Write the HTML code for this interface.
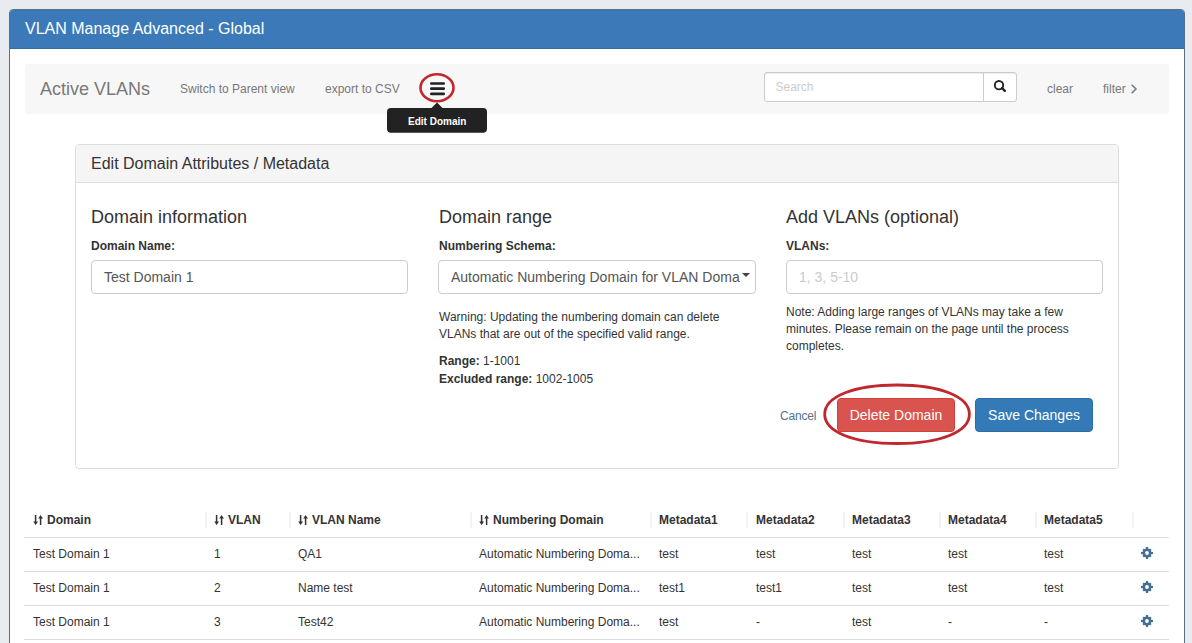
<!DOCTYPE html>
<html><head><meta charset="utf-8">
<style>
*{box-sizing:border-box;margin:0;padding:0}
html,body{width:1192px;height:643px;overflow:hidden}
body{background:#e8ecf1;font-family:"Liberation Sans",sans-serif;color:#333;position:relative}
.a{position:absolute;white-space:nowrap}
#panel{position:absolute;left:9px;top:9px;width:1176px;height:660px;background:#fff;border:1px solid #5b6f80;border-radius:4px;overflow:hidden}
#phead{position:absolute;left:0;top:0;width:100%;height:39px;background:#3c79b8;border-bottom:1px solid #3a6a9a}
#well{position:absolute;left:15px;top:54px;width:1144px;height:50px;background:#f7f7f7;border-radius:3px}
.t16{font-size:16px;line-height:18px}
.t12{font-size:12px;line-height:14px}
.gray{color:#777}
#editp{position:absolute;left:75px;top:144px;width:1044px;height:325px;border:1px solid #dddddd;border-radius:4px;background:#fff}
#editp .hd{position:absolute;left:0;top:0;width:100%;height:38px;background:#f5f5f5;border-bottom:1px solid #ddd;border-radius:3px 3px 0 0}
.inp{position:absolute;height:34px;border:1px solid #ccc;border-radius:4px;background:#fff}
.btn{position:absolute;height:34px;border-radius:4px;color:#fff;font-size:14px;text-align:center;line-height:32px}
table{border-collapse:collapse}
.th,.td{position:absolute;font-size:12px;white-space:nowrap}
.th{font-weight:bold;color:#333}
.hl{position:absolute;left:24px;width:1145px;height:1px;background:#ddd}
.sep{position:absolute;top:512px;width:2px;height:16px;background:#f3f3f3}
</style></head>
<body>
<div id="panel">
  <div id="phead"></div>
</div>
<div class="a t16" style="left:25px;top:20px;color:#fff">VLAN Manage Advanced - Global</div>

<div id="well" style="left:25px;top:64px"></div>
<div class="a gray" style="left:40px;top:79px;font-size:18px;line-height:20px">Active VLANs</div>
<div class="a t12 gray" style="left:180px;top:82px">Switch to Parent view</div>
<div class="a t12 gray" style="left:325px;top:82px">export to CSV</div>

<!-- hamburger -->
<svg class="a" style="left:410px;top:66px" width="60" height="70" viewBox="0 0 60 70">
  <rect x="20" y="16.2" width="15" height="2.6" rx="1.2" fill="#222"/>
  <rect x="20" y="21.3" width="15" height="2.6" rx="1.2" fill="#222"/>
  <rect x="20" y="26.6" width="15" height="2.6" rx="1.2" fill="#222"/>
  <ellipse cx="27" cy="21.8" rx="16.5" ry="13.5" fill="none" stroke="#c1272d" stroke-width="2.6"/>
</svg>
<!-- tooltip -->
<svg class="a" style="left:387px;top:102px" width="100" height="31" viewBox="0 0 100 31">
  <path d="M44.5 6 L50 0.5 L55.5 6 Z" fill="#222"/>
  <rect x="0" y="6" width="100" height="24.8" rx="4" fill="#222"/>
</svg>
<div class="a" style="left:408px;top:116px;font-size:10px;line-height:11px;font-weight:bold;color:#fff">Edit Domain</div>

<!-- search -->
<div class="a" style="left:764px;top:72px;width:253px;height:30px;border:1px solid #ccc;border-radius:3px;background:#fff;box-shadow:inset 0 1px 1px rgba(0,0,0,.075)"></div>
<div class="a" style="left:983px;top:72px;width:1px;height:30px;background:#ccc"></div>
<div class="a t12" style="left:775.5px;top:80px;color:#cbcbcb">Search</div>
<svg class="a" style="left:990px;top:77px" width="20" height="20" viewBox="0 0 20 20">
  <circle cx="9" cy="8.2" r="4.2" fill="none" stroke="#222" stroke-width="1.9"/>
  <line x1="12" y1="11" x2="14.8" y2="13.8" stroke="#222" stroke-width="2.4" stroke-linecap="round"/>
</svg>
<div class="a t12 gray" style="left:1047px;top:82px">clear</div>
<div class="a t12 gray" style="left:1103px;top:82px">filter</div>
<svg class="a" style="left:1128px;top:82px" width="12" height="14" viewBox="0 0 12 14">
  <path d="M3.6 2.8 L8 7 L3.6 11.2" fill="none" stroke="#777" stroke-width="1.5"/>
</svg>

<!-- edit panel -->
<div id="editp"><div class="hd"></div></div>
<div class="a t16" style="left:91px;top:155px">Edit Domain Attributes / Metadata</div>

<div class="a" style="left:91px;top:207px;font-size:18px;line-height:20px">Domain information</div>
<div class="a t12" style="left:91px;top:239px;font-weight:bold">Domain Name:</div>
<div class="inp" style="left:91px;top:260px;width:317px"></div>
<div class="a" style="left:104px;top:269px;font-size:14px;line-height:16px;color:#555">Test Domain 1</div>

<div class="a" style="left:439px;top:207px;font-size:18px;line-height:20px">Domain range</div>
<div class="a t12" style="left:439px;top:239px;font-weight:bold">Numbering Schema:</div>
<div class="inp" style="left:438px;top:260px;width:318px"></div>
<div class="a" style="left:451px;top:269px;font-size:14px;line-height:16px;color:#555">Automatic Numbering Domain for VLAN Doma</div>
<svg class="a" style="left:741px;top:272px" width="10" height="6" viewBox="0 0 10 6"><path d="M1 1 L9 1 L5 5 Z" fill="#444"/></svg>
<div class="a t12" style="left:439px;top:309px;line-height:17px">Warning: Updating the numbering domain can delete<br>VLANs that are out of the specified valid range.</div>
<div class="a t12" style="left:439px;top:352px;line-height:18px"><b>Range:</b> 1-1001<br><b>Excluded range:</b> 1002-1005</div>

<div class="a" style="left:786px;top:207px;font-size:18px;line-height:20px">Add VLANs (optional)</div>
<div class="a t12" style="left:786px;top:239px;font-weight:bold">VLANs:</div>
<div class="inp" style="left:786px;top:260px;width:317px"></div>
<div class="a" style="left:799px;top:269px;font-size:14px;line-height:16px;color:#cbcbcb">1, 3, 5-10</div>
<div class="a t12" style="left:786px;top:304px;line-height:17px">Note: Adding large ranges of VLANs may take a few<br>minutes. Please remain on the page until the process<br>completes.</div>

<div class="a t12" style="left:780px;top:409px;color:#52728f;letter-spacing:-0.2px">Cancel</div>
<div class="btn" style="left:837px;top:398px;width:118px;background:#d9534f;border:1px solid #d43f3a">Delete Domain</div>
<div class="btn" style="left:975px;top:398px;width:118px;background:#337ab7;border:1px solid #2e6da4">Save Changes</div>
<svg class="a" style="left:815px;top:376px" width="165" height="76" viewBox="0 0 165 76">
  <path d="M9.70 38.25 C9.70 20.70 38.64 9.00 82.05 9.00 C125.46 9.00 154.40 20.70 154.40 38.25 C154.40 55.80 125.46 67.50 82.05 67.50 C38.64 67.50 9.70 55.80 9.70 38.25 Z" fill="none" stroke="#c1272d" stroke-width="2.8"/>
</svg>

<!-- table -->
<svg width="0" height="0" style="position:absolute"><defs>
<g id="sorticon"><path d="M2.6 1 V9" stroke="#333" stroke-width="1.5"/><path d="M0.2 7.6 L2.6 11 L5 7.6 Z" fill="#333"/><path d="M7.6 11 V3" stroke="#333" stroke-width="1.5"/><path d="M5.2 4.4 L7.6 1 L10 4.4 Z" fill="#333"/></g>
<g id="gear"><g fill="#456e94"><circle cx="7" cy="7" r="4.5"/><rect x="5.9" y="1" width="2.2" height="12"/><rect x="1" y="5.9" width="12" height="2.2"/><rect x="5.9" y="1.6" width="2.2" height="10.8" transform="rotate(45 7 7)"/><rect x="5.9" y="1.6" width="2.2" height="10.8" transform="rotate(-45 7 7)"/></g><circle cx="7" cy="7" r="1.9" fill="#fff"/></g>
</defs></svg>
<div class="sep" style="left:205px"></div>
<div class="sep" style="left:289px"></div>
<div class="sep" style="left:470px"></div>
<div class="sep" style="left:650px"></div>
<div class="sep" style="left:746px"></div>
<div class="sep" style="left:843px"></div>
<div class="sep" style="left:939px"></div>
<div class="sep" style="left:1035px"></div>
<div class="sep" style="left:1132px"></div>
<svg class="a" style="left:33px;top:514px" width="11" height="12" viewBox="0 0 11 12"><use href="#sorticon"/></svg>
<div class="th" style="left:47px;top:513px;line-height:14px">Domain</div>
<svg class="a" style="left:214px;top:514px" width="11" height="12" viewBox="0 0 11 12"><use href="#sorticon"/></svg>
<div class="th" style="left:228px;top:513px;line-height:14px">VLAN</div>
<svg class="a" style="left:298px;top:514px" width="11" height="12" viewBox="0 0 11 12"><use href="#sorticon"/></svg>
<div class="th" style="left:312px;top:513px;line-height:14px">VLAN Name</div>
<svg class="a" style="left:479px;top:514px" width="11" height="12" viewBox="0 0 11 12"><use href="#sorticon"/></svg>
<div class="th" style="left:493px;top:513px;line-height:14px">Numbering Domain</div>
<div class="th" style="left:659px;top:513px;line-height:14px">Metadata1</div>
<div class="th" style="left:756px;top:513px;line-height:14px">Metadata2</div>
<div class="th" style="left:852px;top:513px;line-height:14px">Metadata3</div>
<div class="th" style="left:948px;top:513px;line-height:14px">Metadata4</div>
<div class="th" style="left:1044px;top:513px;line-height:14px">Metadata5</div>
<div class="td" style="left:33px;top:547px;line-height:14px">Test Domain 1</div>
<div class="td" style="left:214px;top:547px;line-height:14px">1</div>
<div class="td" style="left:298px;top:547px;line-height:14px">QA1</div>
<div class="td" style="left:479px;top:547px;line-height:14px">Automatic Numbering Doma...</div>
<div class="td" style="left:659px;top:547px;line-height:14px">test</div>
<div class="td" style="left:756px;top:547px;line-height:14px">test</div>
<div class="td" style="left:852px;top:547px;line-height:14px">test</div>
<div class="td" style="left:948px;top:547px;line-height:14px">test</div>
<div class="td" style="left:1044px;top:547px;line-height:14px">test</div>
<svg class="a" style="left:1140px;top:546px" width="14" height="14" viewBox="0 0 14 14"><use href="#gear"/></svg>
<div class="td" style="left:33px;top:581px;line-height:14px">Test Domain 1</div>
<div class="td" style="left:214px;top:581px;line-height:14px">2</div>
<div class="td" style="left:298px;top:581px;line-height:14px">Name test</div>
<div class="td" style="left:479px;top:581px;line-height:14px">Automatic Numbering Doma...</div>
<div class="td" style="left:659px;top:581px;line-height:14px">test1</div>
<div class="td" style="left:756px;top:581px;line-height:14px">test1</div>
<div class="td" style="left:852px;top:581px;line-height:14px">test</div>
<div class="td" style="left:948px;top:581px;line-height:14px">test</div>
<div class="td" style="left:1044px;top:581px;line-height:14px">test</div>
<svg class="a" style="left:1140px;top:580px" width="14" height="14" viewBox="0 0 14 14"><use href="#gear"/></svg>
<div class="td" style="left:33px;top:615px;line-height:14px">Test Domain 1</div>
<div class="td" style="left:214px;top:615px;line-height:14px">3</div>
<div class="td" style="left:298px;top:615px;line-height:14px">Test42</div>
<div class="td" style="left:479px;top:615px;line-height:14px">Automatic Numbering Doma...</div>
<div class="td" style="left:659px;top:615px;line-height:14px">test</div>
<div class="td" style="left:756px;top:615px;line-height:14px">-</div>
<div class="td" style="left:852px;top:615px;line-height:14px">test</div>
<div class="td" style="left:948px;top:615px;line-height:14px">-</div>
<div class="td" style="left:1044px;top:615px;line-height:14px">-</div>
<svg class="a" style="left:1140px;top:614px" width="14" height="14" viewBox="0 0 14 14"><use href="#gear"/></svg>
<div class="hl" style="top:537px"></div>
<div class="hl" style="top:571px"></div>
<div class="hl" style="top:605px"></div>
<div class="hl" style="top:639px"></div>

</body></html>
